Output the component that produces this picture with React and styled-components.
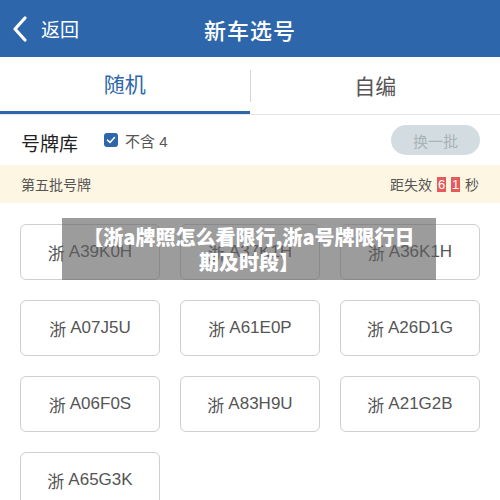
import styled, { createGlobalStyle } from "styled-components";

const Global = createGlobalStyle`
  html, body {
    margin: 0;
    padding: 0;
    background: #ffffff;
  }
  body {
    font-family: "Liberation Sans", "Noto Sans CJK SC", sans-serif;
  }
`;

const Page = styled.div`
  position: relative;
  width: 500px;
  height: 500px;
  overflow: hidden;
  background: #ffffff;
`;

const Header = styled.div`
  height: 57px;
  background: #2d66ab;
  display: grid;
  grid-template-columns: 1fr auto 1fr;
  align-items: center;
  color: #ffffff;
`;

const Back = styled.div`
  display: flex;
  align-items: center;
  gap: 13px;
  padding-left: 12px;
  font-size: 19px;
`;

const Title = styled.div`
  font-size: 22px;
  font-weight: 500;
  letter-spacing: 1px;
`;

const Tabs = styled.div`
  height: 58px;
  display: flex;
  border-bottom: 1px solid #e6e6e6;
  box-sizing: border-box;
`;

const Tab = styled.div`
  flex: 1;
  display: flex;
  align-items: center;
  justify-content: center;
  font-size: 21px;
  padding-bottom: 2px;
  color: ${({ active }) => (active ? "#2d66ab" : "#555555")};
  border-bottom: 3px solid ${({ active }) => (active ? "#2d66ab" : "transparent")};
  & + & {
    border-left: 1px solid #d6d6d6;
    border-image: linear-gradient(to bottom, transparent 14px, #d6d6d6 14px, #d6d6d6 44px, transparent 44px) 1;
    border-bottom: none;
  }
`;

const Toolbar = styled.div`
  height: 50px;
  display: flex;
  align-items: center;
  padding: 0 20px 0 21px;
`;

const Label = styled.div`
  font-size: 19px;
  color: #222222;
  margin-right: 26px;
  padding-top: 4px;
`;

const Check = styled.div`
  width: 14px;
  height: 14px;
  border-radius: 3px;
  background: #2d66ab;
  display: flex;
  align-items: center;
  justify-content: center;
  margin-right: 7px;
`;

const CheckText = styled.div`
  font-size: 15px;
  color: #555555;
`;

const Refresh = styled.button`
  margin-left: auto;
  width: 89px;
  height: 30px;
  border: none;
  border-radius: 15px;
  background: #d3dde1;
  color: #a7b3b8;
  font-size: 15px;
  font-family: inherit;
  padding: 0;
`;

const Notice = styled.div`
  height: 38px;
  background: #fdf6e2;
  display: flex;
  align-items: center;
  justify-content: space-between;
  padding: 0 21px;
  font-size: 14px;
  color: #555555;
`;

const Countdown = styled.div`
  display: flex;
  align-items: center;
  gap: 5px;
`;

const Digit = styled.span`
  display: inline-block;
  width: 9px;
  height: 15px;
  line-height: 15px;
  background: #e85a5a;
  color: #ffffff;
  font-size: 13px;
  text-align: center;
`;

const Grid = styled.div`
  display: grid;
  grid-template-columns: repeat(3, 140px);
  grid-auto-rows: 56px;
  column-gap: 20px;
  row-gap: 20px;
  padding: 21px 20px 0 20px;
`;

const Plate = styled.div`
  border: 1px solid #cfcfcf;
  border-radius: 6px;
  box-sizing: border-box;
  display: flex;
  align-items: center;
  justify-content: center;
  font-size: 17px;
  color: #555555;
  gap: 4px;
`;

const Overlay = styled.div`
  position: absolute;
  left: 62px;
  top: 218px;
  width: 374px;
  height: 62px;
  background: rgba(95, 95, 95, 0.62);
  color: #ffffff;
  font-family: "Noto Sans CJK SC", sans-serif;
  font-weight: 900;
  font-size: 20px;
  line-height: 25px;
  text-align: center;
  display: flex;
  align-items: center;
  justify-content: center;
  padding: 0 14px;
  box-sizing: border-box;
`;

const plates = [
  "A39K0H", "A37K1H", "A36K1H",
  "A07J5U", "A61E0P", "A26D1G",
  "A06F0S", "A83H9U", "A21G2B",
  "A65G3K",
];

export default function App() {
  return (
    <Page>
      <Global />
      <Header>
        <Back>
          <svg width="16" height="28" viewBox="0 0 16 28">
            <path d="M13 3 L3 14 L13 25" fill="none" stroke="#fff" strokeWidth="3.2" strokeLinecap="round" strokeLinejoin="round" />
          </svg>
          <span>返回</span>
        </Back>
        <Title>新车选号</Title>
        <div />
      </Header>
      <Tabs>
        <Tab active>随机</Tab>
        <Tab>自编</Tab>
      </Tabs>
      <Toolbar>
        <Label>号牌库</Label>
        <Check>
          <svg width="10" height="10" viewBox="0 0 10 10">
            <path d="M1.5 5.2 L4 7.5 L8.5 2.5" fill="none" stroke="#fff" strokeWidth="1.6" strokeLinecap="round" strokeLinejoin="round" />
          </svg>
        </Check>
        <CheckText>不含 4</CheckText>
        <Refresh>换一批</Refresh>
      </Toolbar>
      <Notice>
        <span>第五批号牌</span>
        <Countdown>
          <span>距失效</span>
          <Digit>6</Digit>
          <Digit>1</Digit>
          <span>秒</span>
        </Countdown>
      </Notice>
      <Grid>
        {plates.map((p) => (
          <Plate key={p}>
            <span>浙</span>
            <span>{p}</span>
          </Plate>
        ))}
      </Grid>
      <Overlay>【浙a牌照怎么看限行,浙a号牌限行日期及时段】</Overlay>
    </Page>
  );
}
